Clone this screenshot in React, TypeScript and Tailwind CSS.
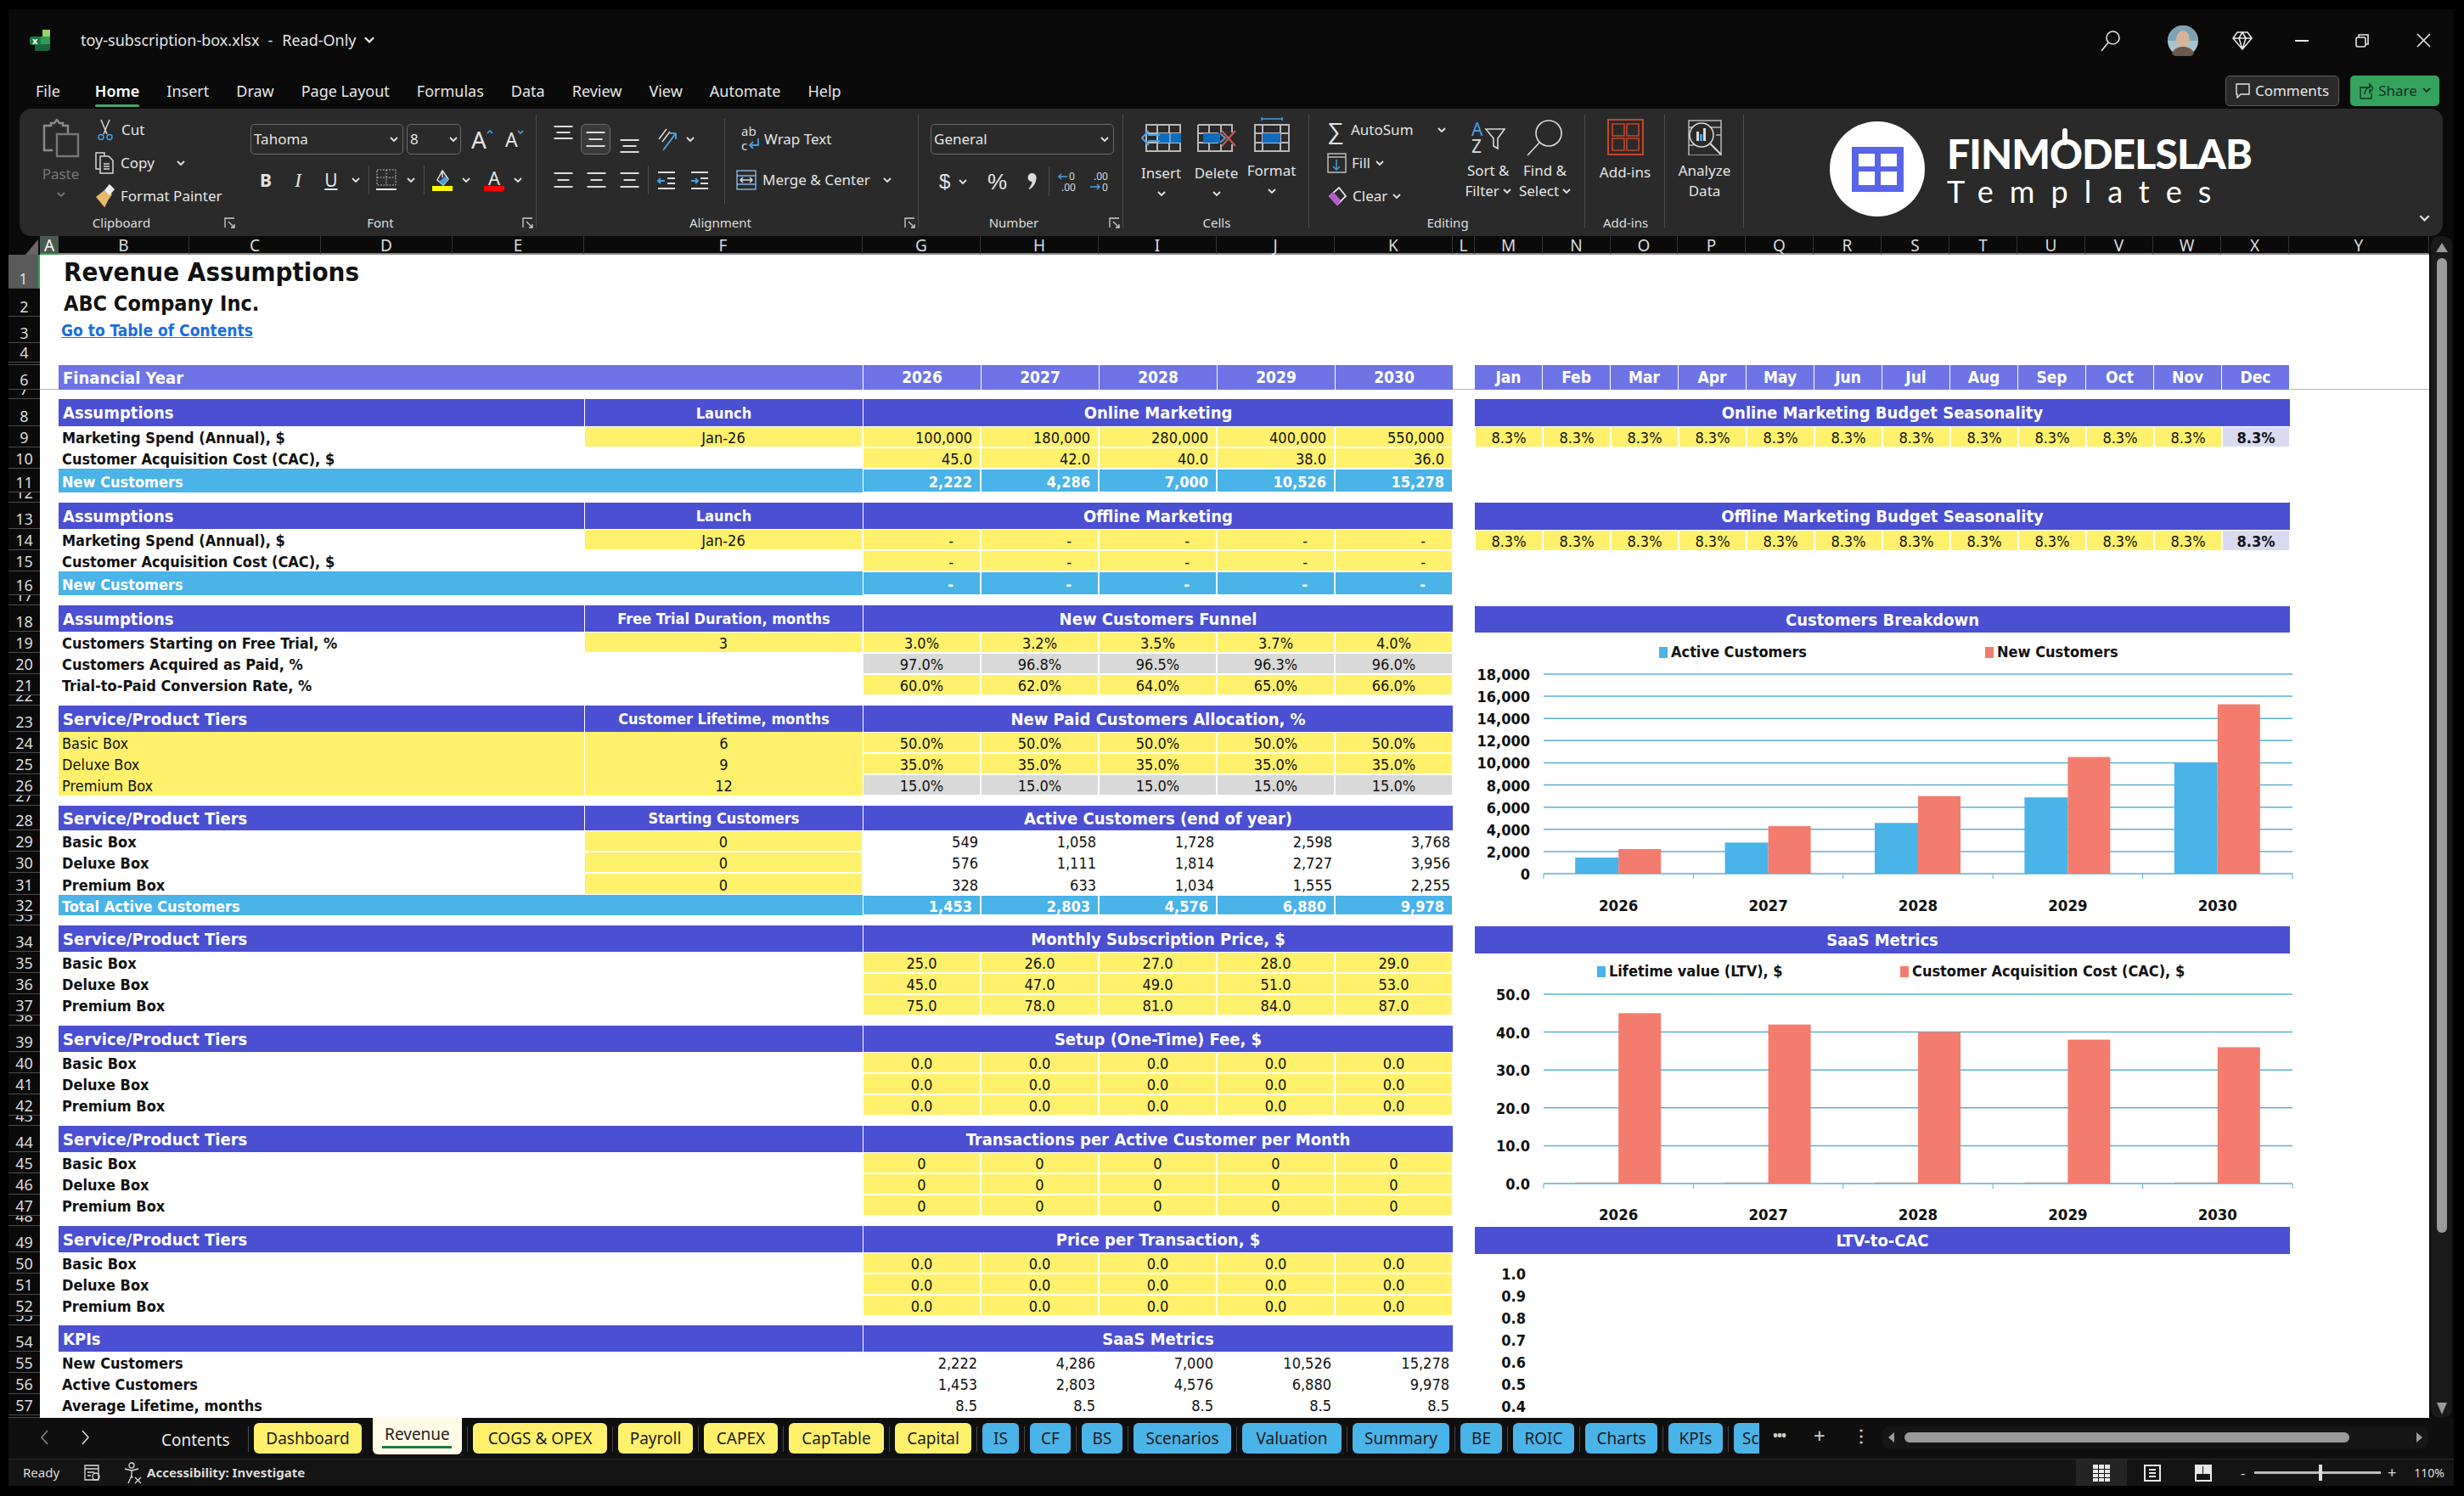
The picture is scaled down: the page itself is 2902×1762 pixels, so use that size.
import type { ReactNode } from "react";

const columns = [
  ["B", "w-[154px]"], ["C", "w-[155px]"], ["D", "w-[155px]"], ["E", "w-[155px]"], ["F", "w-[328px]"],
  ["G", "w-[139px]"], ["H", "w-[139px]"], ["I", "w-[139px]"], ["J", "w-[139px]"], ["K", "w-[139px]"],
  ["L", "w-[26px]"], ["M", "w-[80px]"], ["N", "w-[80px]"], ["O", "w-[79px]"], ["P", "w-[80px]"],
  ["Q", "w-[80px]"], ["R", "w-[80px]"], ["S", "w-[80px]"], ["T", "w-[80px]"], ["U", "w-[80px]"],
  ["V", "w-[80px]"], ["W", "w-[80px]"], ["X", "w-[80px]"], ["Y", "w-[165px]"],
];

const rowHeights: Record<number, number> = {
  1: 40, 2: 33, 3: 31, 4: 23, 5: 3, 6: 29, 7: 11, 8: 32, 9: 25, 10: 25, 11: 28, 12: 12, 13: 31, 14: 25, 15: 25, 16: 28,
  17: 12, 18: 31, 19: 25, 20: 25, 21: 25, 22: 12, 23: 31, 24: 25, 25: 25, 26: 25, 27: 12, 28: 29, 29: 25, 30: 25, 31: 26,
  32: 24, 33: 12, 34: 31, 35: 25, 36: 25, 37: 25, 38: 12, 39: 31, 40: 25, 41: 25, 42: 25, 43: 12, 44: 31, 45: 25, 46: 25,
  47: 25, 48: 12, 49: 31, 50: 25, 51: 25, 52: 25, 53: 11, 54: 31, 55: 25, 56: 25, 57: 25, 58: 3,
};

type Fill = "yellow" | "gray" | "cyan" | "none";
type Row = {
  n: number;
  label: string;
  f?: string;
  tier?: boolean;
  fill: Fill;
  align: "right" | "center" | "plain" | "dash";
  vals: string[];
};
type Section = { n: number; title: string; f?: string; mid: string; rows: Row[] };

const dashes = ["-", "-", "-", "-", "-"];
const zeros = ["0.0", "0.0", "0.0", "0.0", "0.0"];
const tiers = ["Basic Box", "Deluxe Box", "Premium Box"];

const sections: Section[] = [
  {
    n: 8, title: "Assumptions", f: "Launch", mid: "Online Marketing",
    rows: [
      { n: 9, label: "Marketing Spend (Annual), $", f: "Jan-26", fill: "yellow", align: "right", vals: ["100,000", "180,000", "280,000", "400,000", "550,000"] },
      { n: 10, label: "Customer Acquisition Cost (CAC), $", fill: "yellow", align: "right", vals: ["45.0", "42.0", "40.0", "38.0", "36.0"] },
      { n: 11, label: "New Customers", fill: "cyan", align: "right", vals: ["2,222", "4,286", "7,000", "10,526", "15,278"] },
    ],
  },
  {
    n: 13, title: "Assumptions", f: "Launch", mid: "Offline Marketing",
    rows: [
      { n: 14, label: "Marketing Spend (Annual), $", f: "Jan-26", fill: "yellow", align: "dash", vals: dashes },
      { n: 15, label: "Customer Acquisition Cost (CAC), $", fill: "yellow", align: "dash", vals: dashes },
      { n: 16, label: "New Customers", fill: "cyan", align: "dash", vals: dashes },
    ],
  },
  {
    n: 18, title: "Assumptions", f: "Free Trial Duration, months", mid: "New Customers Funnel",
    rows: [
      { n: 19, label: "Customers Starting on Free Trial, %", f: "3", fill: "yellow", align: "center", vals: ["3.0%", "3.2%", "3.5%", "3.7%", "4.0%"] },
      { n: 20, label: "Customers Acquired as Paid, %", fill: "gray", align: "center", vals: ["97.0%", "96.8%", "96.5%", "96.3%", "96.0%"] },
      { n: 21, label: "Trial-to-Paid Conversion Rate, %", fill: "yellow", align: "center", vals: ["60.0%", "62.0%", "64.0%", "65.0%", "66.0%"] },
    ],
  },
  {
    n: 23, title: "Service/Product Tiers", f: "Customer Lifetime, months", mid: "New Paid Customers Allocation, %",
    rows: [
      { n: 24, label: "Basic Box", tier: true, f: "6", fill: "yellow", align: "center", vals: ["50.0%", "50.0%", "50.0%", "50.0%", "50.0%"] },
      { n: 25, label: "Deluxe Box", tier: true, f: "9", fill: "yellow", align: "center", vals: ["35.0%", "35.0%", "35.0%", "35.0%", "35.0%"] },
      { n: 26, label: "Premium Box", tier: true, f: "12", fill: "gray", align: "center", vals: ["15.0%", "15.0%", "15.0%", "15.0%", "15.0%"] },
    ],
  },
  {
    n: 28, title: "Service/Product Tiers", f: "Starting Customers", mid: "Active Customers (end of year)",
    rows: [
      { n: 29, label: "Basic Box", f: "0", fill: "none", align: "plain", vals: ["549", "1,058", "1,728", "2,598", "3,768"] },
      { n: 30, label: "Deluxe Box", f: "0", fill: "none", align: "plain", vals: ["576", "1,111", "1,814", "2,727", "3,956"] },
      { n: 31, label: "Premium Box", f: "0", fill: "none", align: "plain", vals: ["328", "633", "1,034", "1,555", "2,255"] },
      { n: 32, label: "Total Active Customers", fill: "cyan", align: "right", vals: ["1,453", "2,803", "4,576", "6,880", "9,978"] },
    ],
  },
  {
    n: 34, title: "Service/Product Tiers", mid: "Monthly Subscription Price, $",
    rows: [
      { n: 35, label: tiers[0], fill: "yellow", align: "center", vals: ["25.0", "26.0", "27.0", "28.0", "29.0"] },
      { n: 36, label: tiers[1], fill: "yellow", align: "center", vals: ["45.0", "47.0", "49.0", "51.0", "53.0"] },
      { n: 37, label: tiers[2], fill: "yellow", align: "center", vals: ["75.0", "78.0", "81.0", "84.0", "87.0"] },
    ],
  },
  {
    n: 39, title: "Service/Product Tiers", mid: "Setup (One-Time) Fee, $",
    rows: tiers.map((label, i) => ({ n: 40 + i, label, fill: "yellow" as Fill, align: "center" as const, vals: zeros })),
  },
  {
    n: 44, title: "Service/Product Tiers", mid: "Transactions per Active Customer per Month",
    rows: tiers.map((label, i) => ({ n: 45 + i, label, fill: "yellow" as Fill, align: "center" as const, vals: ["0", "0", "0", "0", "0"] })),
  },
  {
    n: 49, title: "Service/Product Tiers", mid: "Price per Transaction, $",
    rows: tiers.map((label, i) => ({ n: 50 + i, label, fill: "yellow" as Fill, align: "center" as const, vals: zeros })),
  },
  {
    n: 54, title: "KPIs", mid: "SaaS Metrics",
    rows: [
      { n: 55, label: "New Customers", fill: "none", align: "plain", vals: ["2,222", "4,286", "7,000", "10,526", "15,278"] },
      { n: 56, label: "Active Customers", fill: "none", align: "plain", vals: ["1,453", "2,803", "4,576", "6,880", "9,978"] },
      { n: 57, label: "Average Lifetime, months", fill: "none", align: "plain", vals: ["8.5", "8.5", "8.5", "8.5", "8.5"] },
    ],
  },
];

const fillClass: Record<Fill, string> = {
  yellow: "bg-[#fff16b]",
  gray: "bg-[#d9d9d9]",
  cyan: "bg-[#4ab3e8] text-white font-bold",
  none: "",
};

const alignClass = {
  right: "justify-end pr-[9px]",
  center: "justify-center",
  plain: "justify-end pr-[3px]",
  dash: "justify-end pr-[31px]",
};

function Chev({ className = "" }: { className?: string }) {
  return (
    <svg width="10" height="7" viewBox="0 0 10 7" className={`shrink-0 ${className}`} fill="none" stroke="currentColor" strokeWidth="1.8">
      <path d="M1 1l4 4 4-4" />
    </svg>
  );
}

function Sep({ className = "h-[36px]" }: { className?: string }) {
  return <div className={`w-px shrink-0 bg-[#4d4d4d] ${className}`} />;
}

function Lines({ rows, className = "" }: { rows: [number, number][]; className?: string }) {
  return (
    <svg width="23" height="24" viewBox="0 0 23 24" className={className} stroke="#dcdcdc" strokeWidth="2">
      {rows.map(([y, w], i) => (
        <path key={i} d={`M${(23 - w) / 2} ${y}h${w}`} />
      ))}
    </svg>
  );
}

function Group({ w, label, launcher, children }: { w: string; label?: string; launcher?: boolean; children: ReactNode }) {
  return (
    <section className={`flex h-full shrink-0 flex-col border-r border-transparent ${w}`}>
      <div className="flex h-[122px] min-h-0">{children}</div>
      <div className={`relative h-[24px] text-center text-[15px] leading-[24px] text-[#dedede] ${launcher ? "pr-[18px]" : ""}`}>
        {label}
        {launcher && (
          <svg width="13" height="13" viewBox="0 0 13 13" className="absolute right-[4px] top-[6px]" fill="none" stroke="#cfcfcf" strokeWidth="1.3">
            <path d="M1 12V1h11M5 5l7 7M8 12h4V8" />
          </svg>
        )}
      </div>
    </section>
  );
}

function ClipboardGroup() {
  return (
    <Group w="w-[259px]" label="Clipboard" launcher>
      <div className="flex w-[89px] flex-col items-center pl-[8px] pt-[12px] text-[#777]">
        <svg width="44" height="46" viewBox="0 0 44 46" fill="none" stroke="#8c8c8c" strokeWidth="2.4">
          <path d="M12 37H2V8h8V5h4l3-4 3 4h4v3h6v9" />
          <path d="M17 18h25v26H17z" stroke="#777" />
        </svg>
        <span className="mt-[8px] text-[17px] leading-[22px]">Paste</span>
        <Chev className="mt-[10px]" />
      </div>
      <div className="flex flex-col pt-[11px] text-[17px] leading-[24px] text-[#e4e4e4]">
        <div className="flex h-[28px] items-center gap-[8px]">
          <svg width="21" height="26" viewBox="0 0 21 26" fill="none" stroke="#d8d8d8" strokeWidth="1.5" className="ml-[2px]">
            <path d="M5 1l7 17M15 1L8 18" />
            <circle cx="5" cy="21.5" r="3" stroke="#4a9ee0" />
            <circle cx="15" cy="21.5" r="3" stroke="#4a9ee0" />
          </svg>
          Cut
        </div>
        <div className="mt-[11px] flex h-[28px] items-center gap-[7px]">
          <svg width="23" height="26" viewBox="0 0 23 26" fill="none" stroke="#d8d8d8" strokeWidth="1.5">
            <path d="M6 20H1V1h10v4" />
            <path d="M6 5h10l5 5v15H6zM10 14h7M10 17h7M10 20h7" />
          </svg>
          Copy
          <Chev className="ml-[19px]" />
        </div>
        <div className="mt-[11px] flex h-[28px] items-center gap-[7px]">
          <svg width="23" height="28" viewBox="0 0 23 28" fill="none" strokeWidth="1.5">
            <path d="M2 15l9 11 4-8 4-6-8-4z" fill="#e8b96a" stroke="#e8b96a" />
            <path d="M12 7l5-6 5 5-5 6z" fill="#f0f0f0" stroke="#f0f0f0" />
          </svg>
          Format Painter
        </div>
      </div>
    </Group>
  );
}

function FontGroup() {
  return (
    <Group w="w-[351px]" label="Font" launcher>
      <div className="flex flex-col pl-[13px] pt-[18px] text-[#e4e4e4]">
        <div className="flex h-[36px] items-center">
          <div className="flex h-[36px] w-[180px] items-center justify-between rounded-[5px] border border-[#6a6a6a] pl-[3px] pr-[5px] text-[17px]">
            Tahoma
            <Chev />
          </div>
          <div className="ml-[4px] flex h-[36px] w-[64px] items-center justify-between rounded-[5px] border border-[#6a6a6a] pl-[3px] pr-[3px] text-[17px]">
            8
            <Chev />
          </div>
          <span className="relative ml-[12px] w-[22px] text-[28px] leading-none">
            A
            <svg width="8" height="6" viewBox="0 0 8 6" className="absolute -right-[4px] top-[2px]" fill="none" stroke="#4a9ee0" strokeWidth="1.6">
              <path d="M1 5l3-3 3 3" />
            </svg>
          </span>
          <span className="relative ml-[18px] w-[20px] text-[23px] leading-none">
            A
            <svg width="8" height="6" viewBox="0 0 8 6" className="absolute -right-[2px] top-[0px]" fill="none" stroke="#4a9ee0" strokeWidth="1.6">
              <path d="M1 1l3 3 3-3" />
            </svg>
          </span>
        </div>
        <div className="mt-[18px] flex h-[24px] items-center">
          <b className="ml-[6px] w-[24px] text-center text-[21px] font-bold leading-none">B</b>
          <i className="ml-[19px] w-[14px] text-center text-[23px] leading-none [font-family:'Liberation_Serif',serif]">I</i>
          <u className="ml-[24px] w-[16px] text-center text-[21px] leading-none">U</u>
          <Chev className="ml-[16px]" />
          <Sep className="ml-[10px] h-[34px]" />
          <svg width="24" height="26" viewBox="0 0 24 26" className="ml-[8px]" fill="none" stroke="#bdbdbd" strokeWidth="1" strokeDasharray="2 1.5">
            <path d="M1 1h22v18H1zM12 1v18M1 10h22" />
            <path d="M0 24h24" stroke="#f0f0f0" strokeWidth="2" strokeDasharray="none" />
          </svg>
          <Chev className="ml-[12px]" />
          <Sep className="ml-[10px] h-[34px]" />
          <div className="ml-[9px] flex w-[24px] flex-col items-center">
            <svg width="20" height="19" viewBox="0 0 20 19" fill="none" stroke="#e0e0e0" strokeWidth="1.5">
              <path d="M10 1l7 10-6 7-7-6zM10 1v8" />
              <path d="M13 8l4 3-6 7-5-4z" fill="#4a9ee0" stroke="none" />
            </svg>
            <div className="h-[6px] w-[24px] bg-[#ffff00]" />
          </div>
          <Chev className="ml-[11px]" />
          <div className="ml-[16px] flex w-[24px] flex-col items-center">
            <span className="text-[22px] leading-[19px]">A</span>
            <div className="h-[6px] w-[24px] bg-[#ff0000]" />
          </div>
          <Chev className="ml-[11px]" />
        </div>
      </div>
      <Sep className="ml-auto mt-[7px] h-[133px]" />
    </Group>
  );
}

function AlignmentGroup() {
  const left: [number, number][] = [[4, 22], [12, 14], [20, 22]];
  return (
    <Group w="w-[450px]" label="Alignment" launcher>
      <div className="flex flex-col pl-[19px] pt-[18px] text-[#e4e4e4]">
        <div className="flex h-[36px] items-center">
          <Lines rows={[[3, 22], [10, 16], [17, 22]]} className="mb-[12px]" />
          <div className="ml-[9px] flex h-[36px] w-[35px] items-center justify-center rounded-[6px] border border-[#6a6a6a] bg-[#3a3a3a]">
            <Lines rows={[[4, 22], [12, 16], [20, 22]]} />
          </div>
          <Lines rows={[[7, 22], [14, 16], [21, 22]]} className="ml-[11px] mt-[12px]" />
          <Sep className="ml-[10px]" />
          <svg width="26" height="30" viewBox="0 0 26 30" className="ml-[9px]" fill="none" strokeWidth="1.5">
            <path d="M3 15L12 3M7 18L16 6" stroke="#dcdcdc" />
            <path d="M8 28L23 8M23 8h-7M23 8v7" stroke="#4a9ee0" strokeWidth="2" />
          </svg>
          <Chev className="ml-[9px]" />
          <Sep className="ml-[35px] h-[100px] self-start -mt-[6px]" />
          <span className="ml-[18px] flex items-center gap-[3px] text-[17px]">
            <svg width="25" height="34" viewBox="0 0 25 34" fill="none">
              <text x="1" y="13" fontSize="15" fill="#dcdcdc">ab</text>
              <text x="1" y="30" fontSize="15" fill="#dcdcdc">c</text>
              <path d="M21 16v8h-9m3-4l-4 4 4 4" stroke="#4a9ee0" strokeWidth="1.8" />
            </svg>
            Wrap Text
          </span>
        </div>
        <div className="mt-[15px] flex h-[30px] items-center">
          <Lines rows={left} />
          <Lines rows={[[4, 22], [12, 14], [20, 22]]} className="ml-[16px]" />
          <Lines rows={left} className="ml-[16px]" />
          <Sep className="ml-[10px] h-[34px]" />
          <svg width="24" height="24" viewBox="0 0 24 24" className="ml-[9px]" fill="none" stroke="#dcdcdc" strokeWidth="2">
            <path d="M2 3h20M13 10h9M13 16h9M2 22h20" />
            <path d="M10 13H2m3-3l-3 3 3 3" stroke="#4a9ee0" />
          </svg>
          <svg width="24" height="24" viewBox="0 0 24 24" className="ml-[15px]" fill="none" stroke="#dcdcdc" strokeWidth="2">
            <path d="M2 3h20M13 10h9M13 16h9M2 22h20" />
            <path d="M2 13h8m-3-3l3 3-3 3" stroke="#4a9ee0" />
          </svg>
          <span className="ml-[31px] flex items-center gap-[7px] text-[17px]">
            <svg width="24" height="24" viewBox="0 0 24 24" fill="none" stroke="#7fb0e0" strokeWidth="1.5">
              <path d="M1 1h22v22H1zM1 7h22M1 17h22" />
              <path d="M5 12h14M8 9l-3 3 3 3M16 9l3 3-3 3" stroke="#dcdcdc" />
            </svg>
            Merge &amp; Center
            <Chev className="ml-[8px]" />
          </span>
        </div>
      </div>
      <Sep className="ml-auto mt-[7px] h-[133px]" />
    </Group>
  );
}

function NumberGroup() {
  return (
    <Group w="w-[241px]" label="Number" launcher>
      <div className="flex flex-col pl-[13px] pt-[18px] text-[#e4e4e4]">
        <div className="flex h-[36px] w-[216px] items-center justify-between rounded-[5px] border border-[#6a6a6a] pl-[3px] pr-[5px] text-[17px]">
          General
          <Chev />
        </div>
        <div className="mt-[15px] flex h-[34px] items-center">
          <span className="ml-[10px] w-[14px] text-[24px] leading-none [font-family:'Liberation_Sans',sans-serif]">$</span>
          <Chev className="ml-[9px]" />
          <span className="ml-[24px] w-[24px] text-[26px] leading-none [font-family:'Liberation_Sans',sans-serif]">%</span>
          <svg width="12" height="22" viewBox="0 0 12 22" className="ml-[22px]" fill="#dcdcdc">
            <circle cx="6.5" cy="6" r="5" />
            <path d="M11.5 6c0 6-3 11-8 14l-1-1c3-3 4-6 4-9z" />
          </svg>
          <Sep className="ml-[14px] h-[34px]" />
          <svg width="26" height="24" viewBox="0 0 26 24" className="ml-[9px]">
            <text x="14" y="10" fontSize="12" fill="#dcdcdc">0</text>
            <text x="5" y="23" fontSize="12" fill="#dcdcdc">.00</text>
            <path d="M12 6H2m3-3L2 6l3 3" stroke="#4a9ee0" strokeWidth="1.5" fill="none" />
          </svg>
          <svg width="26" height="24" viewBox="0 0 26 24" className="ml-[12px]">
            <text x="5" y="10" fontSize="12" fill="#dcdcdc">.00</text>
            <text x="15" y="23" fontSize="12" fill="#dcdcdc">0</text>
            <path d="M1 18h11m-3-3l3 3-3 3" stroke="#4a9ee0" strokeWidth="1.5" fill="none" />
          </svg>
        </div>
      </div>
      <Sep className="ml-auto mt-[7px] h-[133px]" />
    </Group>
  );
}

function CellButton({ label, icon, up }: { label: string; icon: ReactNode; up?: boolean }) {
  return (
    <div className="flex w-[65px] flex-col items-center text-[17px] text-[#e4e4e4]">
      <div className="flex h-[44px] items-end">{icon}</div>
      <span className={`leading-[22px] ${up ? "mt-[11px]" : "mt-[14px]"}`}>{label}</span>
      <Chev className="mt-[10px]" />
    </div>
  );
}

function CellsGroup() {
  const grid = "M1 1h40v31H1zM1 11h40M1 22h40M14 1v31M28 1v31";
  return (
    <Group w="w-[219px]" label="Cells">
      <div className="flex pl-[11px] pt-[7px]">
        <CellButton
          label="Insert"
          icon={
            <svg width="48" height="33" viewBox="0 0 48 33" fill="none">
              <path d={grid} transform="translate(5 0)" stroke="#b8b8b8" strokeWidth="2" />
              <path d="M20 11h27v11H20z" fill="#0f6cbd" />
              <path d="M34 11v11" stroke="#7ab8e8" strokeWidth="1.5" />
              <path d="M22 13H8m14 7H8M9 8L1 16.5 9 25" stroke="#4a9ee0" strokeWidth="2" />
            </svg>
          }
        />
        <CellButton
          label="Delete"
          icon={
            <svg width="46" height="33" viewBox="0 0 46 33" fill="none">
              <path d="M1 1h40v9M41 24v8H1V1M1 11h24M1 22h24M14 1v31M28 1v9M28 24v8" stroke="#b8b8b8" strokeWidth="2" />
              <path d="M7 11h20v11H7z" fill="#0f6cbd" />
              <path d="M27 11l6 5.5-6 5.5" stroke="#4a9ee0" strokeWidth="2" />
              <path d="M29 8l16 18M45 8L29 26" stroke="#d9534f" strokeWidth="2" />
            </svg>
          }
        />
        <CellButton
          up
          label="Format"
          icon={
            <svg width="44" height="41" viewBox="0 0 44 41" fill="none">
              <path d="M10 2h24M10 0v4M34 0v4" stroke="#4a9ee0" strokeWidth="1.5" />
              <path d="M2 9h40v31H2zM2 19h40M2 30h40M11 9v31M32 9v31" stroke="#b8b8b8" strokeWidth="2" />
              <path d="M11 19h21v11H11z" fill="#0f6cbd" />
            </svg>
          }
        />
      </div>
      <Sep className="ml-auto mt-[7px] h-[133px]" />
    </Group>
  );
}

function EditingGroup() {
  return (
    <Group w="w-[325px]" label="Editing">
      <div className="flex flex-col pl-[20px] pt-[11px] text-[17px] text-[#e4e4e4]">
        <div className="flex h-[28px] items-center gap-[8px]">
          <span className="w-[20px] text-[28px] leading-none">∑</span>
          AutoSum
          <Chev className="ml-[20px]" />
        </div>
        <div className="mt-[11px] flex h-[28px] items-center gap-[6px]">
          <svg width="23" height="24" viewBox="0 0 23 24" fill="none" stroke="#bdbdbd" strokeWidth="1.5">
            <path d="M1 1h21v22H1zM1 5h21" />
            <path d="M11 8v12m-4-4l4 4 4-4" stroke="#4a9ee0" />
          </svg>
          Fill
          <Chev />
        </div>
        <div className="mt-[11px] flex h-[28px] items-center gap-[6px]">
          <svg width="24" height="24" viewBox="0 0 24 24" fill="none" strokeWidth="1.8">
            <path d="M14 2l8 10-10 10-9-10z" stroke="#e8e8e8" />
            <path d="M7 8l8 9-3 5-9-10z" fill="#b65cc9" stroke="#b65cc9" />
          </svg>
          Clear
          <Chev />
        </div>
      </div>
      <div className="ml-[23px] flex flex-col items-center pt-[13px] text-[17px] leading-[24px] text-[#e4e4e4]">
        <svg width="43" height="41" viewBox="0 0 43 41" fill="none" strokeWidth="1.6">
          <text x="2" y="19" fontSize="21" fill="#4a9ee0">A</text>
          <text x="2" y="39" fontSize="21" fill="#dcdcdc">Z</text>
          <path d="M19 11h22L33 22v12l-5-3v-9z" stroke="#dcdcdc" />
        </svg>
        <span className="mt-[7px]">Sort &amp;</span>
        <span className="flex items-center gap-[4px]">Filter<Chev /></span>
      </div>
      <div className="ml-[9px] flex flex-col items-center pt-[13px] text-[17px] leading-[24px] text-[#e4e4e4]">
        <svg width="44" height="43" viewBox="0 0 44 43" fill="none" stroke="#dcdcdc" strokeWidth="1.6">
          <ellipse cx="27" cy="16" rx="15" ry="15" />
          <path d="M16 27L2 42" />
        </svg>
        <span className="mt-[5px]">Find &amp;</span>
        <span className="flex items-center gap-[4px]">Select<Chev /></span>
      </div>
      <Sep className="ml-auto mt-[7px] h-[133px]" />
    </Group>
  );
}

function Logo() {
  return (
    <div className="ml-[100px] flex items-center pb-[8px] text-white">
      <div className="flex h-[112px] w-[112px] items-center justify-center rounded-full bg-white">
        <div className="grid h-[53px] w-[61px] grid-cols-2 gap-x-[7px] gap-y-[6px] bg-[#5865e8] px-[8px] py-[8px]">
          <div className="bg-white" />
          <div className="bg-white" />
          <div className="bg-white" />
          <div className="bg-white" />
        </div>
      </div>
      <div className="ml-[26px] flex w-[370px] flex-col pt-[4px] [font-family:Lato,sans-serif]">
        <div className="h-[48px] text-[48px] font-black leading-[48px] tracking-[-0.9px]">
          FINM
          <span className="relative">
            O<span className="absolute left-[15px] -top-[1px] h-[20px] w-[6px] rounded-full bg-white" />
          </span>
          DELSLAB
        </div>
        <div className="mt-[0px] text-[36px] font-normal leading-[40px] tracking-[19px]">Templates</div>
      </div>
    </div>
  );
}

function TitleBar() {
  return (
    <div className="flex h-[74px] items-center pb-[1px] text-[#e6e6e6]">
      <svg width="24" height="25" viewBox="0 0 24 25" className="ml-[25px]">
        <path d="M6 0h18v8H15V0z" fill="#9ad36a" />
        <path d="M6 8h18v9H6z" fill="#2f9e55" />
        <path d="M6 17h18v5a3 3 0 01-3 3H6z" fill="#17663a" />
        <path d="M3 8h10v10H3a3 3 0 01-3-3v-4a3 3 0 013-3z" fill="#1a7a44" />
        <text x="3" y="16.5" fontSize="11" fontWeight="700" fill="#fff">x</text>
      </svg>
      <span className="ml-[36px] text-[18px]">toy-subscription-box.xlsx</span>
      <span className="ml-[10px] text-[18px]">-</span>
      <span className="ml-[11px] text-[18px]">Read-Only</span>
      <Chev className="ml-[8px] h-[9px] w-[14px]" />
      <svg width="24" height="26" viewBox="0 0 24 26" className="ml-auto" fill="none" stroke="#e6e6e6" strokeWidth="1.6">
        <circle cx="14.5" cy="9.5" r="7.5" />
        <path d="M9 15L1 25" />
      </svg>
      <svg width="36" height="36" viewBox="0 0 36 36" className="ml-[55px]">
        <circle cx="18" cy="18" r="18" fill="#a9c4cf" />
        <path d="M0 18a18 18 0 0136 0z" fill="#7ea2b3" />
        <ellipse cx="18" cy="16" rx="8" ry="10" fill="#d8b49b" />
        <path d="M5 33c2-6 8-8 13-8s11 2 13 8a18 18 0 01-26 0z" fill="#6d5a4e" />
      </svg>
      <svg width="24" height="22" viewBox="0 0 24 22" className="ml-[40px]" fill="none" stroke="#e6e6e6" strokeWidth="1.6">
        <path d="M6 1h12l5 7-11 13L1 8zM1 8h22M8 8l4 13 4-13M8 8l4-7 4 7" />
      </svg>
      <div className="ml-[50px] h-[2px] w-[16px] bg-[#e6e6e6]" />
      <svg width="16" height="16" viewBox="0 0 16 16" className="ml-[55px]" fill="none" stroke="#e6e6e6" strokeWidth="1.6">
        <path d="M4 4V1h11v11h-3" />
        <rect x="1" y="4" width="11" height="11" rx="2" />
      </svg>
      <svg width="17" height="17" viewBox="0 0 17 17" className="ml-[56px] mr-[27px]" fill="none" stroke="#e6e6e6" strokeWidth="1.6">
        <path d="M1 1l15 15M16 1L1 16" />
      </svg>
    </div>
  );
}

function MenuBar() {
  const items = ["Home", "Insert", "Draw", "Page Layout", "Formulas", "Data", "Review", "View", "Automate", "Help"];
  return (
    <div className="flex h-[43px] items-center pl-[32px] pr-[17px] text-[18px] text-[#e6e6e6]">
      <span className="mr-[41px] leading-[26px]">File</span>
      <div className="flex gap-[32px]">
        {items.map((item) => (
          <span key={item} className={`relative leading-[26px] ${item === "Home" ? "font-semibold text-white" : ""}`}>
            {item}
            {item === "Home" && <span className="absolute -bottom-[6px] left-0 h-[3px] w-full rounded bg-[#4ca370]" />}
          </span>
        ))}
      </div>
      <div className="ml-auto flex h-[36px] w-[134px] items-center justify-center gap-[6px] rounded-[5px] border border-[#5d5d5d] bg-[#2a2a2a] text-[17px]">
        <svg width="17" height="18" viewBox="0 0 17 18" fill="none" stroke="#e6e6e6" strokeWidth="1.4">
          <path d="M1 1h15v12H6l-4 4v-4H1z" />
        </svg>
        Comments
      </div>
      <div className="ml-[13px] flex h-[36px] w-[105px] items-center justify-center gap-[6px] rounded-[5px] bg-[#34a35e] text-[17px] text-[#17331f]">
        <svg width="17" height="20" viewBox="0 0 17 20" fill="none" stroke="#17331f" strokeWidth="1.4">
          <path d="M12 6H2v13h13v-6M7 14c0-5 3-8 6-8V2l4 5-4 5V8" />
        </svg>
        Share
        <Chev />
      </div>
    </div>
  );
}

function Ribbon() {
  return (
    <div className="mx-[13px] flex h-[150px] rounded-[14px] bg-[#2a2a2a]">
      <ClipboardGroup />
      <FontGroup />
      <AlignmentGroup />
      <NumberGroup />
      <CellsGroup />
      <EditingGroup />
      <Group w="w-[94px]" label="Add-ins">
        <div className="flex w-full flex-col items-center pt-[12px] text-[17px] text-[#e4e4e4]">
          <svg width="43" height="43" viewBox="0 0 43 43" fill="none" stroke="#c4472a" strokeWidth="2">
            <path d="M1 1h41v41H1z" />
            <path d="M6 6h14v14H6zM23 6h14v14H23zM6 23h14v14H6zM23 23h14v14H23z" strokeWidth="1.6" />
          </svg>
          <span className="mt-[7px]">Add-ins</span>
        </div>
        <Sep className="mt-[7px] h-[133px]" />
      </Group>
      <Group w="w-[93px]">
        <div className="flex w-full flex-col items-center pt-[13px] text-[17px] leading-[24px] text-[#e4e4e4]">
          <svg width="50" height="42" viewBox="0 0 50 42" fill="none" stroke="#b8b8b8" strokeWidth="1.5">
            <path d="M6 1h38v41H6zM6 9h38M6 18h6M38 18h6M6 30h6" />
            <circle cx="21" cy="18" r="14" fill="#2a2a2a" stroke="#dcdcdc" />
            <path d="M31 28l13 13" stroke="#dcdcdc" strokeWidth="2" />
            <path d="M15 14h3v11h-3zM23 10h3v15h-3z" fill="#dcdcdc" stroke="none" />
            <path d="M19 17h3v8h-3z" fill="#4a9ee0" stroke="none" />
          </svg>
          <span className="mt-[6px]">Analyze</span>
          <span>Data</span>
        </div>
        <Sep className="mt-[7px] h-[133px]" />
      </Group>
      <Logo />
      <Chev className="ml-auto mr-[14px] mt-[125px] h-[9px] w-[15px] text-[#dcdcdc]" />
    </div>
  );
}

function ColumnHeaders() {
  return (
    <div className="flex h-[22px] items-center text-[19px] leading-[22px] text-[#dcdcdc]">
      <div className="flex h-full w-[37px] items-end justify-end pr-[2px]">
        <div className="h-0 w-0 border-b-[18px] border-l-[15px] border-b-[#666] border-l-transparent" />
      </div>
      <div className="h-full w-[22px] border-b-2 border-[#2f9e55] bg-[#4a5a50] text-center text-white">A</div>
      {columns.map(([name, w]) => (
        <div key={name} className={`h-full border-b-2 border-r border-b-[#888] border-r-[#333] text-center ${w}`}>
          {name}
        </div>
      ))}
      <div className="ml-[2px] flex h-full w-[25px] items-center justify-center rounded-t-[10px] bg-[#1a1a1a] pt-[4px]">
        <div className="h-0 w-0 border-b-[11px] border-l-[7px] border-r-[7px] border-b-[#9a9a9a] border-l-transparent border-r-transparent" />
      </div>
    </div>
  );
}

function RowHeaders() {
  const numbers = Object.keys(rowHeights).map(Number);
  return (
    <div className="w-[37px] shrink-0 bg-[#0a0a0a] text-[18px] text-[#dcdcdc]">
      {numbers.map((n) => (
        <div
          key={n}
          style={{ height: rowHeights[n] }}
          className={`flex items-end justify-center overflow-hidden border-b border-[#4a4a4a] leading-[22px] ${n === 1 ? "border-r-2 border-r-[#2f9e55] bg-[#5a5a5a]" : ""}`}
        >
          {n === 5 || n === 58 ? "" : n}
        </div>
      ))}
    </div>
  );
}

function SectionHeader({ section }: { section: Section }) {
  return (
    <div style={{ height: rowHeights[section.n] }} className="flex items-center bg-[#4b4fd1] font-bold text-white">
      {section.f ? (
        <>
          <div className="w-[619px] pl-[5px] text-[20px]">{section.title}</div>
          <div className="flex h-full w-[328px] items-center justify-center border-l border-white text-[18px]">{section.f}</div>
        </>
      ) : (
        <div className="w-[947px] pl-[5px] text-[20px]">{section.title}</div>
      )}
      <div className="flex h-full w-[695px] items-center justify-center border-l border-white text-[20px]">{section.mid}</div>
    </div>
  );
}

function DataRow({ row }: { row: Row }) {
  const isTotal = row.fill === "cyan";
  const isPlainF = row.fill === "none" && row.f;
  return (
    <div style={{ height: rowHeights[row.n] }} className={`flex text-[18px] ${isTotal ? "bg-[#4ab3e8] font-bold text-white" : "text-[#111]"}`}>
      {row.tier ? (
        <>
          <div className="flex w-[619px] items-center bg-[#fff16b] pl-[4px] pt-[2px]">{row.label}</div>
          <div className="flex w-[328px] items-center justify-center border-l border-white bg-[#fff16b] pt-[2px]">{row.f}</div>
        </>
      ) : (
        <>
          <div className="flex w-[619px] items-center pl-[4px] pt-[2px] font-bold">{row.label}</div>
          <div className={`flex w-[328px] items-center justify-center border border-white pt-[2px] ${row.f ? "bg-[#fff16b]" : isTotal ? "border-none" : ""}`}>{row.f}</div>
        </>
      )}
      {row.vals.map((v, i) => (
        <div key={i} className={`flex w-[139px] items-center pt-[2px] ${isPlainF ? "" : "border border-white"} ${fillClass[row.fill]} ${alignClass[row.align]}`}>
          {v}
        </div>
      ))}
    </div>
  );
}

function Seasonality({ title }: { title: string }) {
  return (
    <>
      <div className="flex h-[32px] items-center justify-center bg-[#4b4fd1] text-[20px] font-bold text-white">{title}</div>
      <div className="flex h-[25px] text-[18px] text-[#111]">
        {Array.from({ length: 12 }, (_, i) => (
          <div key={i} className={`flex w-[80px] items-center justify-center border border-white pt-[2px] ${i === 11 ? "bg-[#d9daf2] font-bold" : "bg-[#fff16b]"}`}>
            8.3%
          </div>
        ))}
      </div>
    </>
  );
}

type Series = { values: number[]; color: string };
type LegendItem = { x: number; label: string; color: string };

function BarChart(props: {
  height: number;
  y0: number;
  yMax: number;
  max: number;
  ticks: number[];
  format: (v: number) => string;
  legend: LegendItem[];
  legendY: number;
  series: Series[];
  catY: number;
}) {
  const { height, y0, yMax, max, ticks, format, legend, legendY, series, catY } = props;
  const x0 = 81;
  const x1 = 963;
  const cat = (x1 - x0) / 5;
  const py = (v: number) => y0 - ((y0 - yMax) * v) / max;
  const years = ["2026", "2027", "2028", "2029", "2030"];
  return (
    <svg width="966" height={height} viewBox={`0 0 966 ${height}`} className="block" fontFamily="'DejaVu Sans Condensed','DejaVu Sans',sans-serif" fontWeight="700" fontSize="18">
      {legend.map((l) => (
        <g key={l.label}>
          <rect x={l.x} y={legendY - 7} width="10" height="13" fill={l.color} />
          <text x={l.x + 14} y={legendY + 5} fill="#111">{l.label}</text>
        </g>
      ))}
      {ticks.map((t) => (
        <g key={t}>
          <line x1={x0} x2={x1} y1={py(t)} y2={py(t)} stroke="#5bb0d3" strokeWidth="1.5" />
          <text x={x0 - 16} y={py(t) + 7} textAnchor="end" fontSize="18" fill="#111">{format(t)}</text>
        </g>
      ))}
      {[0, 1, 2, 3, 4, 5].map((i) => (
        <line key={i} x1={x0 + cat * i} x2={x0 + cat * i} y1={y0} y2={y0 + 6} stroke="#5bb0d3" strokeWidth="1" />
      ))}
      {years.map((year, i) => {
        const c = x0 + cat * (i + 0.5);
        return (
          <g key={year}>
            {series.map((s, k) => (
              <rect key={k} x={k === 0 ? c - 51 : c} y={py(s.values[i])} width={k === 0 ? 51 : 50} height={y0 - py(s.values[i])} fill={s.color} />
            ))}
            <text x={c} y={catY} textAnchor="middle" fontSize="18.5" fill="#111">{year}</text>
          </g>
        );
      })}
    </svg>
  );
}

function RightPane() {
  return (
    <div className="ml-[26px] w-[1098px] shrink-0">
      <div className="h-[11px]" />
      <div className="w-[960px]">
        <Seasonality title="Online Marketing Budget Seasonality" />
        <div className="h-[65px]" />
        <Seasonality title="Offline Marketing Budget Seasonality" />
        <div className="h-[65px]" />
        <div className="flex h-[31px] items-center justify-center bg-[#4b4fd1] text-[20px] font-bold text-white">Customers Breakdown</div>
      </div>
      <BarChart
        height={346}
        y0={284}
        yMax={49}
        max={18000}
        ticks={[0, 2000, 4000, 6000, 8000, 10000, 12000, 14000, 16000, 18000]}
        format={(v) => v.toLocaleString("en-US")}
        legendY={24}
        legend={[
          { x: 217, label: "Active Customers", color: "#4ab3e8" },
          { x: 601, label: "New Customers", color: "#f47c6e" },
        ]}
        series={[
          { values: [1453, 2803, 4576, 6880, 9978], color: "#4ab3e8" },
          { values: [2222, 4286, 7000, 10526, 15278], color: "#f47c6e" },
        ]}
        catY={328}
      />
      <div className="flex h-[32px] w-[960px] items-center justify-center bg-[#4b4fd1] text-[20px] font-bold text-white">SaaS Metrics</div>
      <BarChart
        height={322}
        y0={271}
        yMax={48}
        max={50}
        ticks={[0, 10, 20, 30, 40, 50]}
        format={(v) => v.toFixed(1)}
        legendY={22}
        legend={[
          { x: 144, label: "Lifetime value (LTV), $", color: "#4ab3e8" },
          { x: 501, label: "Customer Acquisition Cost (CAC), $", color: "#f47c6e" },
        ]}
        series={[
          { values: [0.3, 0.3, 0.3, 0.3, 0.3], color: "#a6a6a6" },
          { values: [45, 42, 40, 38, 36], color: "#f47c6e" },
        ]}
        catY={314}
      />
      <div className="flex h-[32px] w-[960px] items-center justify-center bg-[#4b4fd1] text-[20px] font-bold text-white">LTV-to-CAC</div>
      <div className="w-[60px] pt-[11px] text-right text-[18px] font-bold leading-[26px] text-[#111]">
        {["1.0", "0.9", "0.8", "0.7", "0.6", "0.5", "0.4"].map((v) => (
          <div key={v}>{v}</div>
        ))}
      </div>
    </div>
  );
}

function Sheet() {
  const months = ["Jan", "Feb", "Mar", "Apr", "May", "Jun", "Jul", "Aug", "Sep", "Oct", "Nov", "Dec"];
  const years = ["2026", "2027", "2028", "2029", "2030"];
  return (
    <div className="flex h-[1370px] overflow-hidden">
      <RowHeaders />
      <div className="w-[2814px] shrink-0 overflow-hidden bg-white [font-family:'DejaVu_Sans_Condensed','DejaVu_Sans',sans-serif]">
        <div className="h-[159px] border-b border-[#b5b5b5] pl-[22px]">
          <div className="h-[130px] pl-[6px] font-bold text-[#111]">
            <div className="h-[40px] text-[31px] leading-[40px]">Revenue Assumptions</div>
            <div className="h-[33px] text-[25px] leading-[36px]">ABC Company Inc.</div>
            <div className="-ml-[3px] h-[31px] text-[19px] leading-[32px] text-[#1a6fe0] underline">Go to Table of Contents</div>
          </div>
          <div className="flex h-[29px]">
            <div className="flex w-[947px] items-center bg-[#6e74e6] pl-[5px] text-[20px] font-bold text-white">Financial Year</div>
            {years.map((y) => (
              <div key={y} className="flex w-[139px] items-center justify-center border-l border-white bg-[#6e74e6] text-[19px] font-bold text-white">
                {y}
              </div>
            ))}
            <div className="w-[26px]" />
            {months.map((m) => (
              <div key={m} className="flex w-[80px] items-center justify-center border-r border-white bg-[#6e74e6] text-[19px] font-bold text-white">
                {m}
              </div>
            ))}
          </div>
        </div>
        <div className="flex pl-[22px]">
          <div className="w-[1642px] shrink-0">
            <div className="h-[11px]" />
            {sections.map((section, i) => (
              <div key={section.n}>
                <SectionHeader section={section} />
                {section.rows.map((row) => (
                  <DataRow key={row.n} row={row} />
                ))}
                {i < sections.length - 1 && <div style={{ height: rowHeights[section.rows[section.rows.length - 1].n + 1] }} />}
              </div>
            ))}
          </div>
          <RightPane />
        </div>
      </div>
      <div className="ml-[2px] flex w-[25px] shrink-0 flex-col items-center rounded-b-[10px] bg-[#1a1a1a]">
        <div className="mt-[4px] h-[1148px] w-[12px] rounded-full bg-[#9a9a9a]" />
        <div className="mt-[200px] h-0 w-0 border-l-[6px] border-r-[6px] border-t-[14px] border-l-transparent border-r-transparent border-t-[#9a9a9a]" />
      </div>
    </div>
  );
}

const tabs = [
  { name: "Dashboard", w: "w-[128px]", bg: "bg-[#fff16b]" },
  { name: "COGS & OPEX", w: "w-[158px]", bg: "bg-[#fff16b]" },
  { name: "Payroll", w: "w-[88px]", bg: "bg-[#fff16b]" },
  { name: "CAPEX", w: "w-[87px]", bg: "bg-[#fff16b]" },
  { name: "CapTable", w: "w-[112px]", bg: "bg-[#fff16b]" },
  { name: "Capital", w: "w-[90px]", bg: "bg-[#fff16b]" },
  { name: "IS", w: "w-[43px]", bg: "bg-[#4ab3e8]" },
  { name: "CF", w: "w-[48px]", bg: "bg-[#4ab3e8]" },
  { name: "BS", w: "w-[48px]", bg: "bg-[#4ab3e8]" },
  { name: "Scenarios", w: "w-[115px]", bg: "bg-[#4ab3e8]" },
  { name: "Valuation", w: "w-[117px]", bg: "bg-[#4ab3e8]" },
  { name: "Summary", w: "w-[114px]", bg: "bg-[#4ab3e8]" },
  { name: "BE", w: "w-[49px]", bg: "bg-[#4ab3e8]" },
  { name: "ROIC", w: "w-[72px]", bg: "bg-[#4ab3e8]" },
  { name: "Charts", w: "w-[85px]", bg: "bg-[#4ab3e8]" },
  { name: "KPIs", w: "w-[64px]", bg: "bg-[#4ab3e8]" },
];

function TabBar() {
  return (
    <div className="flex h-[48px] bg-[#0f0f0f] text-[19px] text-[#1c1c1c]">
      <div className="flex w-[180px] items-start pl-[36px] pt-[13px] text-[#888]">
        <svg width="12" height="20" viewBox="0 0 12 20" fill="none" stroke="currentColor" strokeWidth="1.5">
          <path d="M10 2L3 10l7 8" />
        </svg>
        <svg width="12" height="20" viewBox="0 0 12 20" className="ml-[37px] text-[#ddd]" fill="none" stroke="currentColor" strokeWidth="1.5">
          <path d="M2 2l7 8-7 8" />
        </svg>
      </div>
      <div className="flex w-[102px] items-center pt-[4px] text-[#e6e6e6]">Contents</div>
      <Sep className="mt-[10px] h-[30px]" />
      <div className="ml-[6px] flex w-[1773px] overflow-hidden pt-[6px]">
        <div className={`flex h-[36px] items-center justify-center rounded-[6px] bg-[#fff16b] ${tabs[0].w}`}>{tabs[0].name}</div>
        <div className="ml-[13px] -mt-[6px] flex h-[43px] w-[106px] flex-col items-center rounded-b-[6px] bg-[#fffbe6] pt-[6px] leading-[26px] text-[#222]">
          Revenue
          <div className="mt-[1px] h-[3px] w-[82px] bg-[#1a7a40]" />
        </div>
        {tabs.slice(1).map((t) => (
          <div key={t.name} className="flex items-start">
            <Sep className="ml-[6px] mt-[4px] h-[30px] bg-[#444]" />
            <div className={`ml-[6px] flex h-[36px] items-center justify-center rounded-[6px] ${t.bg} ${t.w}`}>{t.name}</div>
          </div>
        ))}
        <Sep className="ml-[6px] mt-[4px] h-[30px] shrink-0 bg-[#444]" />
        <div className="ml-[6px] flex h-[36px] w-[30px] shrink-0 items-center overflow-hidden rounded-l-[6px] bg-[#4ab3e8] pl-[10px]">Sc</div>
      </div>
      <div className="flex w-[145px] items-start pt-[10px] text-[#ccc]">
        <span className="ml-[16px] text-[16px] font-bold leading-[20px] tracking-[-1px]">•••</span>
        <span className="ml-[33px] text-[24px] leading-[22px]">+</span>
        <span className="ml-[32px] text-[20px] font-bold leading-[22px]">⋮</span>
      </div>
      <div className="mt-[10px] flex h-[26px] w-[643px] items-center justify-between rounded-[8px] bg-[#161616] px-[7px]">
        <div className="h-0 w-0 border-b-[6px] border-r-[7px] border-t-[6px] border-b-transparent border-r-[#9a9a9a] border-t-transparent" />
        <div className="ml-[12px] mr-auto h-[12px] w-[524px] rounded-full bg-[#9a9a9a]" />
        <div className="h-0 w-0 border-b-[6px] border-l-[7px] border-t-[6px] border-b-transparent border-l-[#9a9a9a] border-t-transparent" />
      </div>
    </div>
  );
}

function StatusBar() {
  return (
    <div className="flex h-[32px] items-center border-t border-[#2c2c2c] bg-[#141414] text-[15px] text-[#dcdcdc]">
      <span className="ml-[17px]">Ready</span>
      <svg width="22" height="22" viewBox="0 0 22 22" className="ml-[28px]" fill="none" stroke="#dcdcdc" strokeWidth="1.3">
        <path d="M2 2h16v17H2zM2 6h16M5 10h8M5 14h4" />
        <circle cx="15" cy="15" r="4" />
      </svg>
      <svg width="22" height="26" viewBox="0 0 22 26" className="ml-[26px]" fill="none" stroke="#dcdcdc" strokeWidth="1.3">
        <circle cx="9" cy="4" r="3" />
        <path d="M1 8l8 2 8-2M9 10v6M9 16l-4 9M9 16l1 3M13 18l7 7M20 18l-7 7" />
      </svg>
      <b className="ml-[5px] font-bold">Accessibility: Investigate</b>
      <div className="ml-auto flex h-full w-[60px] items-center justify-center bg-[#242424]">
        <svg width="20" height="20" viewBox="0 0 20 20" fill="#e8e8e8">
          <path d="M0 0h20v20H0z" />
          <path d="M6 0h1v20H6zM13 0h1v20h-1zM0 5h20v1H0zM0 10h20v1H0zM0 15h20v1H0z" fill="#141414" />
        </svg>
      </div>
      <svg width="20" height="20" viewBox="0 0 20 20" className="ml-[20px]" fill="none" stroke="#e8e8e8" strokeWidth="2">
        <path d="M1 1h18v18H1zM6 6h8M6 10h8M6 14h8" />
      </svg>
      <svg width="20" height="20" viewBox="0 0 20 20" className="ml-[40px]" fill="#e8e8e8">
        <path d="M0 0h20v20H0z" />
        <path d="M9 2h1v9H9zM2 11h16v7H2z" fill="#141414" />
      </svg>
      <span className="ml-[34px] text-[16px]">-</span>
      <div className="relative ml-[11px] h-[3px] w-[149px] bg-[#bbb]">
        <div className="absolute left-[76px] top-[-8px] h-[19px] w-[4px] bg-[#ddd]" />
      </div>
      <span className="ml-[8px] text-[18px]">+</span>
      <span className="ml-[21px] mr-[11px] text-[14px]">110%</span>
    </div>
  );
}

export default function App() {
  return (
    <div className="h-[1762px] w-[2902px] overflow-hidden bg-black pb-[12px] pl-[10px] pr-[12px] pt-[11px] [font-family:'Noto_Sans',sans-serif]">
      <div className="flex h-[1739px] w-[2880px] flex-col bg-[#0a0a0a]">
        <TitleBar />
        <MenuBar />
        <Ribbon />
        <ColumnHeaders />
        <Sheet />
        <TabBar />
        <StatusBar />
      </div>
    </div>
  );
}
